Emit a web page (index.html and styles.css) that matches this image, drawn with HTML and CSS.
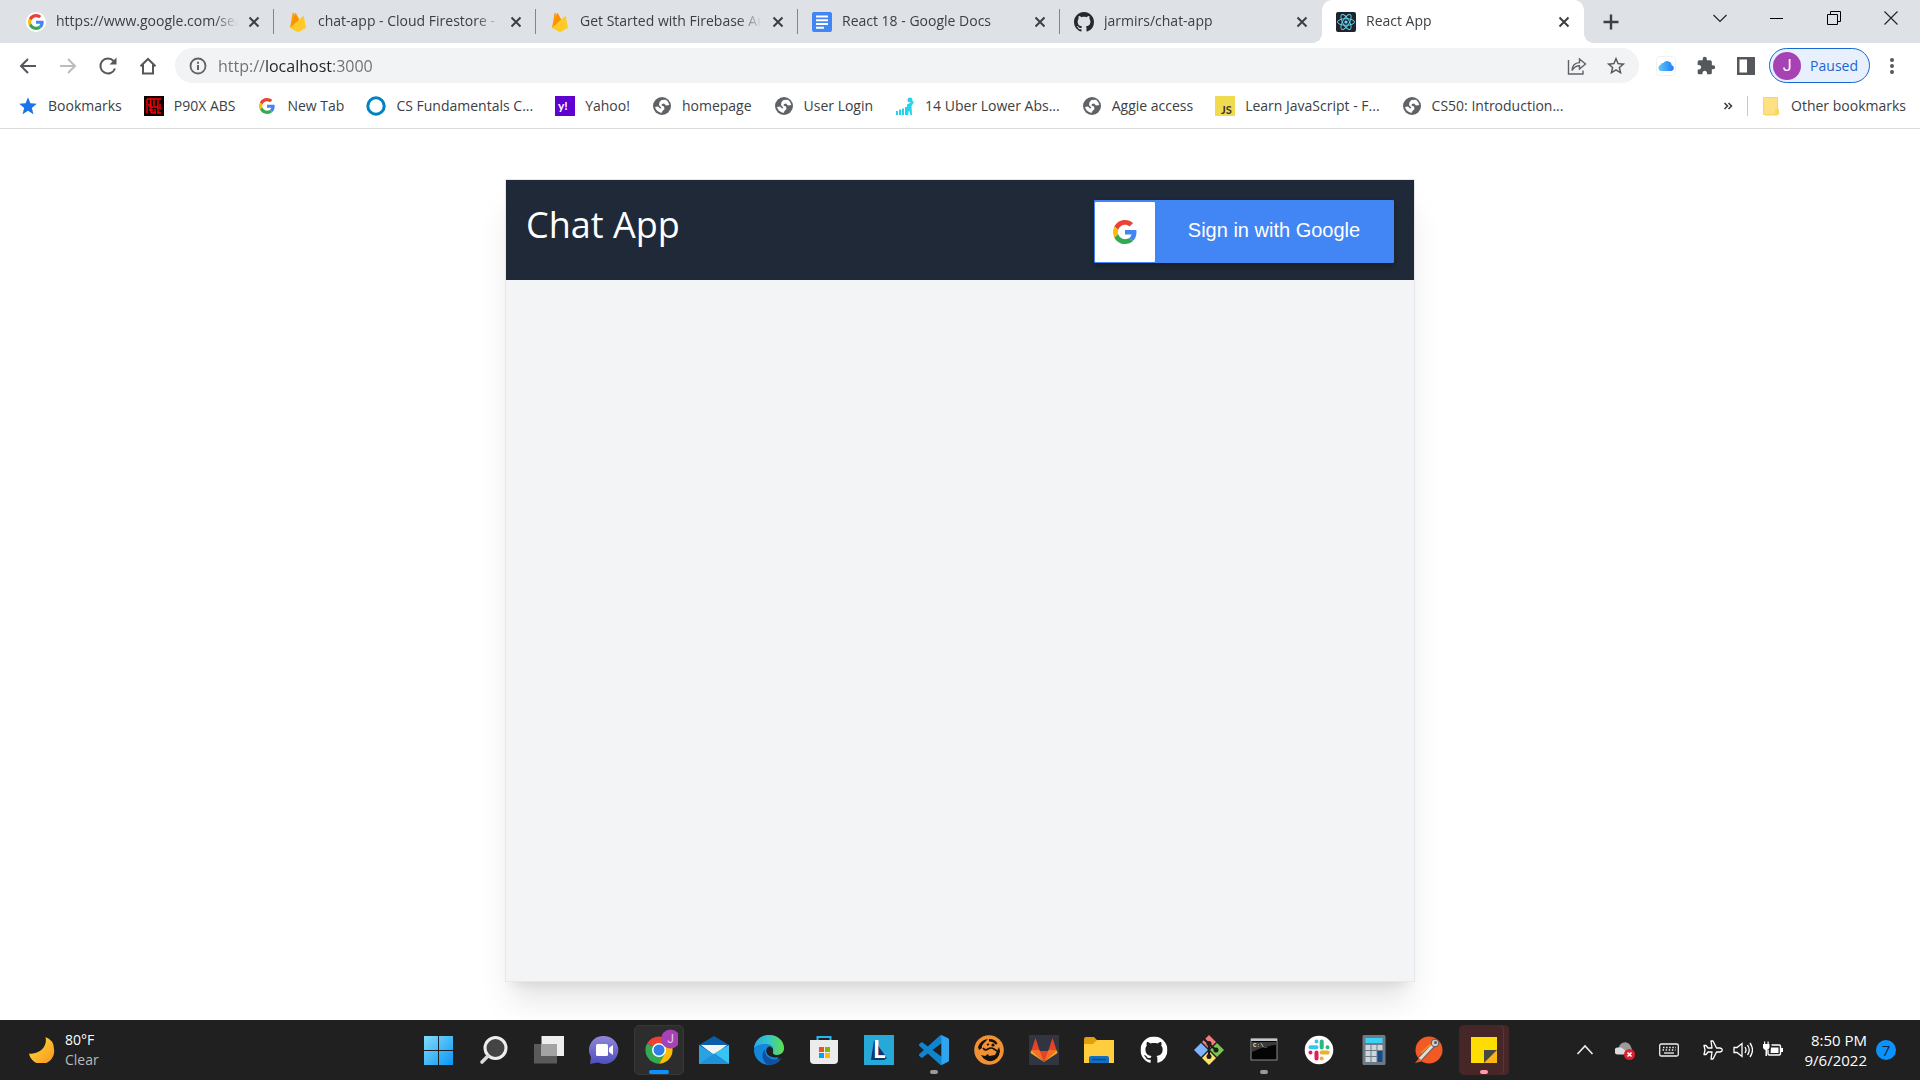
FILE: index.html
```html
<!DOCTYPE html>
<html lang="en">
<head>
<meta charset="utf-8">
<title>React App</title>
<link rel="stylesheet" href="styles.css">
</head>
<body>
<svg class="defs" aria-hidden="true">
  <defs>
    <symbol id="google" viewBox="0 0 48 48">
      <path fill="#ea4335" d="M24 9.5c3.54 0 6.71 1.22 9.21 3.6l6.85-6.85C35.9 2.38 30.47 0 24 0 14.62 0 6.51 5.38 2.56 13.22l7.98 6.19C12.43 13.72 17.74 9.5 24 9.5z"/>
      <path fill="#4285f4" d="M46.98 24.55c0-1.57-.15-3.09-.38-4.55H24v9.02h12.94c-.58 2.96-2.26 5.48-4.78 7.18l7.73 6c4.51-4.18 7.09-10.36 7.09-17.65z"/>
      <path fill="#fbbc05" d="M10.53 28.59c-.48-1.45-.76-2.99-.76-4.59s.27-3.14.76-4.59l-7.98-6.19C.92 16.46 0 20.12 0 24c0 3.88.92 7.54 2.56 10.78l7.97-6.19z"/>
      <path fill="#34a853" d="M24 48c6.48 0 11.93-2.13 15.89-5.81l-7.73-6c-2.15 1.45-4.92 2.3-8.16 2.3-6.26 0-11.57-4.22-13.47-9.91l-7.98 6.19C6.51 42.62 14.62 48 24 48z"/>
    </symbol>
    <symbol id="firebase" viewBox="0 0 20 20">
      <path fill="#ffa000" d="M2 16 4.600 .8q.3-.7.800 0l2.600 4.700z"/>
      <path fill="#ff9100" d="M2 16 7 1.500q.5-.9 1 0l3.500 6.500z"/>
      <path fill="#ffca28" d="M2 16 14.800 4.200q.8-.5 1 .4L18 16l-7 3.700q-1 .5-2 0z"/>
    </symbol>
    <symbol id="github" viewBox="0 0 16 16">
      <path fill="currentColor" d="M8 0C3.58 0 0 3.58 0 8c0 3.54 2.29 6.53 5.47 7.59.4.07.55-.17.55-.38 0-.19-.01-.82-.01-1.49-2.01.37-2.53-.49-2.69-.94-.09-.23-.48-.94-.82-1.13-.28-.15-.68-.52-.01-.53.63-.01 1.08.58 1.23.82.72 1.21 1.87.87 2.33.66.07-.52.28-.87.51-1.07-1.78-.2-3.64-.89-3.64-3.95 0-.87.31-1.59.82-2.15-.08-.2-.36-1.02.08-2.12 0 0 .67-.21 2.2.82.64-.18 1.32-.27 2-.27.68 0 1.36.09 2 .27 1.53-1.04 2.2-.82 2.2-.82.44 1.1.16 1.92.08 2.12.51.56.82 1.27.82 2.15 0 3.07-1.87 3.75-3.65 3.95.29.25.54.73.54 1.48 0 1.07-.01 1.93-.01 2.2 0 .21.15.46.55.38A8.013 8.013 0 0016 8c0-4.42-3.58-8-8-8z"/>
    </symbol>
    <symbol id="globe" viewBox="0 0 20 20">
      <circle cx="10" cy="10" r="9" fill="#5f6368"/>
      <path fill="#fff" d="M9.500 4 14 3.800Q17 6 17.300 9L14 9.500 12 7.500 10 8 9.500 9.500 12 10.500 12.500 13 10.500 15 9.500 17Q4 15.500 3 11L6 10.500 8 12.500 9.500 12 7 9 7.500 6z"/>
    </symbol>
    <symbol id="close" viewBox="0 0 20 20">
      <path stroke="#3c4043" stroke-width="2" fill="none" d="m5.500 5.500 9 9m0-9-9 9"/>
    </symbol>
  </defs>
</svg>

<header class="browser">
  <div class="tabstrip">
    <nav class="tabs" aria-label="Tabs">
      <div class="tab"><span class="tab-icon round"><svg width="16" height="16"><use href="#google"/></svg></span><a class="tab-title" href="#">https://www.google.com/search</a><button class="tab-close" aria-label="Close tab"><svg width="20" height="20"><use href="#close"/></svg></button></div>
      <div class="tab"><span class="tab-icon"><svg width="20" height="20"><use href="#firebase"/></svg></span><a class="tab-title" href="#">chat-app - Cloud Firestore - Firebase</a><button class="tab-close" aria-label="Close tab"><svg width="20" height="20"><use href="#close"/></svg></button></div>
      <div class="tab"><span class="tab-icon"><svg width="20" height="20"><use href="#firebase"/></svg></span><a class="tab-title" href="#">Get Started with Firebase Authentication</a><button class="tab-close" aria-label="Close tab"><svg width="20" height="20"><use href="#close"/></svg></button></div>
      <div class="tab"><span class="tab-icon"><svg width="20" height="20" viewBox="0 0 20 20"><rect width="20" height="20" rx="2" fill="#4285f4"/><path stroke="#fff" stroke-width="2" d="M4 4.500h12M4 8.300h12M4 12h12M4 15.700h8"/></svg></span><a class="tab-title" href="#">React 18 - Google Docs</a><button class="tab-close" aria-label="Close tab"><svg width="20" height="20"><use href="#close"/></svg></button></div>
      <div class="tab"><span class="tab-icon"><svg width="20" height="20"><use href="#github"/></svg></span><a class="tab-title" href="#">jarmirs/chat-app</a><button class="tab-close" aria-label="Close tab"><svg width="20" height="20"><use href="#close"/></svg></button></div>
      <div class="tab active"><span class="tab-icon"><svg width="20" height="20" viewBox="0 0 20 20"><rect width="20" height="20" rx="2" fill="#20232a"/><g fill="none" stroke="#61dafb" stroke-width=".9"><ellipse cx="10" cy="10" rx="8.500" ry="3.300"/><ellipse cx="10" cy="10" rx="8.500" ry="3.300" transform="rotate(60 10 10)"/><ellipse cx="10" cy="10" rx="8.500" ry="3.300" transform="rotate(120 10 10)"/></g><circle cx="10" cy="10" r="1.600" fill="#61dafb"/></svg></span><a class="tab-title" href="#">React App</a><button class="tab-close" aria-label="Close tab"><svg width="20" height="20"><use href="#close"/></svg></button></div>
    </nav>
    <button class="new-tab" aria-label="New tab"><svg width="20" height="20" viewBox="0 0 20 20"><path stroke="#3c4043" stroke-width="2.400" d="M10 2.500v15M2.500 10h15"/></svg></button>
    <div class="window-controls">
      <button aria-label="Search tabs"><svg width="14" height="14" viewBox="0 0 14 14"><path fill="none" stroke="#202124" stroke-width="1.200" d="m.500 4 6.500 6.500L13.500 4"/></svg></button>
      <button aria-label="Minimize"><svg width="14" height="14" viewBox="0 0 14 14"><path stroke="#000" d="M0 7.500h13"/></svg></button>
      <button aria-label="Restore"><svg width="14" height="14" viewBox="0 0 14 14"><path fill="none" stroke="#000" d="M.500 3.500h10v10H.500zM3.500 3.500v-3h10v10h-3"/></svg></button>
      <button aria-label="Close window"><svg width="14" height="14" viewBox="0 0 14 14"><path stroke="#202124" stroke-width="1.100" d="m.500.500 13 13m0-13-13 13"/></svg></button>
    </div>
  </div>

  <div class="toolbar">
    <div class="nav-buttons">
      <button aria-label="Back"><svg width="20" height="20" viewBox="0 0 20 20"><path fill="none" stroke="#54585d" stroke-width="2" d="M18 10H3m7-7-7 7 7 7"/></svg></button>
      <button aria-label="Forward" disabled><svg width="20" height="20" viewBox="0 0 20 20"><path fill="none" stroke="#babcbe" stroke-width="2" d="M2 10h15m-7-7 7 7-7 7"/></svg></button>
      <button aria-label="Reload"><svg width="20" height="20" viewBox="0 0 20 20"><path fill="none" stroke="#54585d" stroke-width="2" d="M17 12.500A7.500 7.500 0 1 1 15.600 5"/><path fill="#54585d" d="M18.500 1.500v7h-7z"/></svg></button>
      <button aria-label="Home"><svg width="20" height="20" viewBox="0 0 20 20"><path fill="none" stroke="#54585d" stroke-width="2" d="M2.500 10.300 10 3l7.500 7.300M5 8.500V17.500h10V8.500"/></svg></button>
    </div>
    <div class="omnibox">
      <svg width="18" height="18" viewBox="0 0 18 18"><circle cx="9" cy="9" r="7.500" fill="none" stroke="#5f6368" stroke-width="1.800"/><path stroke="#5f6368" stroke-width="2" d="M9 8v5M9 4.700v2"/></svg>
      <input class="address" type="text" aria-label="Address" value="http://localhost:3000">
      <button aria-label="Share"><svg width="20" height="20" viewBox="0 0 20 20"><path fill="none" stroke="#5f6368" stroke-width="1.400" d="M1.500 4v14h14.500v-3.500M5 14.500c.2-5 3.200-7.700 7.500-7.900V3l6 5-6 5V9.700c-3.500 0-5.500 1.500-7.500 4.800z"/></svg></button>
      <button aria-label="Bookmark this tab"><svg width="22" height="22" viewBox="0 0 24 24"><path fill="#54585d" d="M22 9.240l-7.190-.62L12 2 9.190 8.630 2 9.240l5.460 4.730L5.820 21 12 17.270 18.180 21l-1.630-7.030L22 9.240zM12 15.400l-3.760 2.270 1-4.280-3.320-2.880 4.380-.38L12 6.100l1.710 4.040 4.380.38-3.320 2.880 1 4.280L12 15.400z"/></svg></button>
    </div>
    <div class="extensions">
      <button aria-label="iCloud Bookmarks"><svg width="20" height="20" viewBox="0 0 20 20"><defs><linearGradient id="cloud"><stop offset="0" stop-color="#5cc8fa"/><stop offset="1" stop-color="#1f7bf6"/></linearGradient></defs><rect x=".5" y=".5" width="19" height="19" rx="3" fill="#fff" stroke="#f1f1f1"/><path fill="url(#cloud)" d="M5.500 15a3 3 0 0 1-.8-5.900 2 2 0 0 1 2.500-2 4.700 4.700 0 0 1 8.500 2.100A3 3 0 0 1 15.500 15z"/></svg></button>
      <button aria-label="Extensions"><svg width="20" height="20" viewBox="0 0 24 24"><path fill="#54585d" d="M20.500 11H19V7c0-1.100-.9-2-2-2h-4V3.500a2.500 2.500 0 0 0-5 0V5H4c-1.100 0-1.990.9-1.990 2v3.800H3.500c1.490 0 2.700 1.210 2.700 2.700s-1.210 2.700-2.700 2.700H2V20c0 1.100.9 2 2 2h3.800v-1.500c0-1.490 1.210-2.700 2.700-2.700s2.700 1.210 2.700 2.700V22H17c1.100 0 2-.9 2-2v-4h1.500a2.500 2.500 0 0 0 0-5z"/></svg></button>
      <button aria-label="Side panel"><svg width="20" height="20" viewBox="0 0 20 20"><path fill="#54585d" fill-rule="evenodd" d="M1 1h18v18H1zM3.500 3.500v13h7.500v-13z"/></svg></button>
    </div>
    <button class="profile"><span class="avatar">J</span>Paused</button>
    <button class="menu" aria-label="Menu"><svg width="20" height="20" viewBox="0 0 20 20"><g fill="#54585d"><circle cx="10" cy="4" r="2"/><circle cx="10" cy="10" r="2"/><circle cx="10" cy="16" r="2"/></g></svg></button>
  </div>

  <nav class="bookmarks" aria-label="Bookmarks">
    <a href="#"><svg width="20" height="20" viewBox="0 0 24 24"><path fill="#1a73e8" d="m12 1.500 2.900 7.300 7.600.6-5.900 5 1.900 7.600L12 17.800 5.500 22l1.900-7.600-5.900-5 7.600-.6z"/></svg>Bookmarks</a>
    <a href="#"><svg width="20" height="20" viewBox="0 0 20 20"><path fill="#100" d="M0 0h20v20H0z"/><path fill="none" stroke="#f00" stroke-width="1.400" d="M3 3v14M3 3h3.500v6H4M7 3h6M10 3v7M7 8v9M17 3h-3v14h3M5 11h9M5 14h4M11 13v4M16 8v5M7 17h5"/></svg>P90X ABS</a>
    <a href="#"><svg width="20" height="20" viewBox="0 0 20 20"><use href="#google" x="2" y="2" width="16" height="16"/></svg>New Tab</a>
    <a href="#"><svg width="20" height="20" viewBox="0 0 20 20"><circle cx="10" cy="10" r="8.200" fill="none" stroke="#0082c3" stroke-width="3"/></svg>CS Fundamentals C...</a>
    <a href="#"><svg width="20" height="20" viewBox="0 0 20 20"><path fill="#5f01d1" d="M0 0h20v20H0z"/><text x="3" y="14" class="yahoo">y!</text></svg>Yahoo!</a>
    <a href="#"><svg width="20" height="20"><use href="#globe"/></svg>homepage</a>
    <a href="#"><svg width="20" height="20"><use href="#globe"/></svg>User Login</a>
    <a href="#"><svg width="20" height="20" viewBox="0 0 20 20"><path stroke="#22d3ee" stroke-width="2" d="M2 15v4M5 13.500V19M8 12.500V19M11 11v8"/><circle cx="15" cy="4" r="2.500" fill="#22d3ee"/><path fill="#22d3ee" d="M12 8.500 15 7l3-2 1 1-2.500 4 .5 9h-1.500L14 14l-1 5h-1z"/></svg>14 Uber Lower Abs...</a>
    <a href="#"><svg width="20" height="20"><use href="#globe"/></svg>Aggie access</a>
    <a href="#"><svg width="20" height="20" viewBox="0 0 20 20"><path fill="#f0db4f" d="M0 0h20v20H0z"/><text x="6" y="18" class="js">JS</text></svg>Learn JavaScript - F...</a>
    <a href="#"><svg width="20" height="20"><use href="#globe"/></svg>CS50: Introduction...</a>
    <button class="more" aria-label="More bookmarks"><svg width="10" height="10" viewBox="0 0 10 10"><path fill="none" stroke="#3c4043" stroke-width="1.600" d="m1.500 2 3 3-3 3m4-6 3 3-3 3"/></svg></button>
    <a class="other" href="#"><svg width="20" height="20" viewBox="0 0 20 20"><path fill="#ffe082" stroke="#fbd35f" d="M2.500 1.500h14v17h-14z"/><path fill="#ffd65c" d="M14 13.500q2-2 4 0V18q-1 1.500-2 1.500H4V18h10z"/></svg>Other bookmarks</a>
  </nav>
</header>

<main class="page">
  <section class="chat">
    <div class="chat-header">
      <h1>Chat App</h1>
      <button class="sign-in"><span class="sign-in-logo"><svg width="24" height="24"><use href="#google"/></svg></span><span class="sign-in-label">Sign in with Google</span></button>
    </div>
  </section>
</main>

<footer class="taskbar">
  <button class="weather">
    <svg width="26" height="26" viewBox="0 0 26 26"><defs><linearGradient id="moon" x1="0" y1="0" x2="1" y2="1"><stop offset="0" stop-color="#ffe03c"/><stop offset="1" stop-color="#f7941e"/></linearGradient></defs><path fill="url(#moon)" d="M16.500 0A13 13 0 0 1 25 12 12 12 0 0 1 0 16.500C10 18 19 10 16.500 0z"/></svg>
    <span class="weather-text"><span>80°F</span><span class="sky">Clear</span></span>
  </button>

  <nav class="apps" aria-label="Apps">
    <button aria-label="Start"><svg width="30" height="30" viewBox="0 0 30 30"><defs><linearGradient id="win" x1="0" y1="0" x2="1" y2="1" gradientUnits="objectBoundingBox"><stop offset="0" stop-color="#82dcfb"/><stop offset="1" stop-color="#0a96f5"/></linearGradient></defs><path fill="url(#win)" d="M0 1h14v14H0zM15 1h14v14H15zM0 16h14v14H0zM15 16h14v14H15z"/></svg></button>
    <button aria-label="Search"><svg width="30" height="30" viewBox="0 0 30 30"><circle cx="16.500" cy="13" r="10.500" fill="#444" stroke="#eee" stroke-width="3"/><path stroke="#d8dadd" stroke-width="3.600" stroke-linecap="round" d="m9 21-6 6"/></svg></button>
    <button aria-label="Task view"><svg width="30" height="30" viewBox="0 0 30 30"><path fill="#5a5a5a" d="M0 9h23v19.500H0z"/><path fill="#eee" d="M7.500 1H30v20H7.500z"/><path fill="#a3a3a3" d="M7.500 9H23v12H7.500z"/></svg></button>
    <button aria-label="Chat"><svg width="30" height="30" viewBox="0 0 30 30"><defs><linearGradient id="teams" x1="0" y1="0" x2="0" y2="1"><stop offset="0" stop-color="#9187d8"/><stop offset="1" stop-color="#4f50c0"/></linearGradient></defs><path fill="url(#teams)" d="M15.500 1a14 14 0 1 1-6.500 26.500L1 29l1-7A14 14 0 0 1 15.500 1z"/><rect x="7" y="9" width="12" height="12" rx="1.500" fill="#fff"/><path fill="#fff" d="m20 13 4-3v10l-4-3z"/></svg></button>
    <button class="current" aria-label="Chrome"><svg width="36" height="36" viewBox="0 0 36 36"><path fill="#ea4335" d="M17 21 5.200 14.200a13.700 13.700 0 0 1 23.600 0H17z"/><path fill="#34a853" d="M5.200 14.200A13.700 13.700 0 0 0 17 34.700l6-10.300-6-3.400z"/><path fill="#fbbc05" d="M28.800 14.200A13.700 13.700 0 0 1 17 34.700l6-10.300V14.200z"/><circle cx="17" cy="21" r="7" fill="#fff"/><circle cx="17" cy="21" r="5.500" fill="#2f7de9"/><circle cx="28.500" cy="10" r="9.500" fill="#a742b5"/><text x="28.500" y="14" class="badge-j">J</text></svg></button>
    <button aria-label="Mail"><svg width="30" height="30" viewBox="0 0 30 30"><path fill="#0a5ea8" d="m15 1 15 9v6H0v-6z"/><path fill="#f3f3f3" d="M2 10h26L15 20z"/><path fill="#2aa3e3" d="m0 10 15 9.500L30 29H0z"/><path fill="#39c3f3" d="m30 10-15 8.500L30 29z"/><path fill="#1e93dc" d="M0 29 15 18.500 30 29z"/></svg></button>
    <button aria-label="Edge"><svg width="30" height="30" viewBox="0 0 30 30"><defs><linearGradient id="edge"><stop offset="0" stop-color="#2aa8e8"/><stop offset=".5" stop-color="#35c8c5"/><stop offset="1" stop-color="#62e048"/></linearGradient></defs><circle cx="15" cy="15" r="15" fill="#1387dc"/><path fill="#202020" d="M30 14v9.500l-3 3-4-2z"/><path fill="url(#edge)" d="M0 13C1 5 7 0 15 0c9 0 15 6 15 13 0 4.500-3 7-7 7-3 0-5-1-4-3.500 1.500-4-2-7.500-7-7.500-5.500 0-9.500 1.500-12 4z"/><path fill="#1251a0" d="M11 14c-1 8 7 13 16.500 9C24.500 28 20 30 15.500 30 9 29 6 19 11 14z"/><path fill="#202020" d="M15 11.500c3 0 4.500 2.500 4 5-.3 2 .5 3.500 4 3.500 2.500 0 4.500-1 6-2.500-1 4-4.500 5-8 5-5.500 0-10-4-8.500-8.500q.7-2 2.500-2.500z"/></svg></button>
    <button aria-label="Store"><svg width="30" height="30" viewBox="0 0 30 30"><path fill="none" stroke="#27b5ef" stroke-width="2" d="M8.500 7V2h13v5"/><path fill="#ececec" d="M1 5h28v20q0 4-4 4H5q-4 0-4-4z"/><path fill="#f25022" d="M10 12h5v5h-5z"/><path fill="#7fba00" d="M16 12h5v5h-5z"/><path fill="#00a4ef" d="M10 18h5v5h-5z"/><path fill="#ffb900" d="M16 18h5v5h-5z"/></svg></button>
    <button aria-label="LockDown Browser"><svg width="30" height="30" viewBox="0 0 30 30"><path fill="#27a9d8" d="M0 0h30v30H0z"/><path fill="#10356e" d="M10 5 7 25h13l3-2z"/><text x="9" y="23" class="ell">L</text></svg></button>
    <button class="running" aria-label="Visual Studio Code"><svg width="30" height="30" viewBox="0 0 24 24"><path fill="#1184cf" d="M23.150 2.587L18.210.21a1.494 1.494 0 0 0-1.705.29l-9.460 8.630-4.120-3.128a.999.999 0 0 0-1.276.057L.327 7.261A1 1 0 0 0 .326 8.740L3.899 12 .326 15.260a1 1 0 0 0 .001 1.479L1.650 17.940a.999.999 0 0 0 1.276.057l4.120-3.128 9.460 8.630a1.492 1.492 0 0 0 1.704.29l4.942-2.377A1.500 1.500 0 0 0 24 20.060V3.939a1.500 1.500 0 0 0-.85-1.352zm-5.146 14.861L10.826 12l7.178-5.448v10.896z"/><path fill="#2fa5f0" d="M18 .1 23.150 2.587a1.500 1.500 0 0 1 .85 1.352V20.060a1.500 1.500 0 0 1-.85 1.352L18 23.900z"/></svg></button>
    <button aria-label="Mascot"><svg width="30" height="30" viewBox="0 0 30 30"><circle cx="15" cy="15" r="14.800" fill="#f19134"/><path fill="#17110b" d="M4 12Q7 4.500 14 4l-4 4q-3 3-2 5l-3 2zM15 4q7 0 8.500 5l-2 .5q-2-3-6.500-3zM7 20l4 1 3-2 1 2 6-1 4-8 1 4q-1 8-8 10-7 1-11-6z"/><path fill="none" stroke="#17110b" stroke-width="1.600" d="M9 13q2 3 5 1t6 0l3 2M13 10l2-1"/><circle cx="19" cy="10" r="1.600" fill="#17110b"/></svg></button>
    <button aria-label="GitLab"><svg width="30" height="30" viewBox="0 0 30 30"><path fill="#30353f" d="M0 0h30v30H0z"/><path fill="#e24329" d="m15 27-5-11h10zM2.500 15l4-12 4 12zM27.500 15l-4-12-4 12z"/><path fill="#fc6d26" d="M15 27 2.500 15h8zM15 27l12.500-12h-8z"/><path fill="#fca326" d="M15 27 1.500 18l1-3zM15 27l13.500-9-1-3z"/></svg></button>
    <button aria-label="File Explorer"><svg width="30" height="30" viewBox="0 0 30 30"><path fill="#e0a00c" d="M0 4q0-2 2-2h8l3 3h15v8H0z"/><path fill="#ffcd3d" d="M0 9h9l4-4h17v23H0z"/><path fill="#126fc4" d="M5 28v-5q0-2 2-2h16q2 0 2 2v5z"/><path stroke="#084a8c" stroke-width="1.500" d="M8 24.500h14"/></svg></button>
    <button class="light" aria-label="GitHub Desktop"><svg width="30" height="30" viewBox="0 0 30 30"><use href="#github" x="1.500" y="1.500" width="27" height="27"/></svg></button>
    <button aria-label="Git"><svg width="30" height="30" viewBox="0 0 30 30"><path fill="#f47c7c" d="m15 0 7 7-7 7-7-7z"/><path fill="#7fb2ff" d="m7 8 7 7-7 7-7-7z"/><path fill="#7bc54e" d="m23 8 7 7-7 7-7-7z"/><path fill="#fbe36b" d="m15 16 7 7-7 7-7-7z"/><path fill="none" stroke="#1d1d1d" stroke-width="2.200" d="m9 3 6 6v12M15 9l7 6"/><g fill="#1d1d1d"><circle cx="15" cy="8.500" r="2.500"/><circle cx="22" cy="15" r="2.500"/><circle cx="15" cy="21.500" r="2.500"/></g></svg></button>
    <button class="running" aria-label="Command Prompt"><svg width="30" height="30" viewBox="0 0 30 30"><rect x="2" y="4" width="26" height="21" fill="#050505" stroke="#8a8d91"/><path fill="#c2c7cc" d="M2 3.500h26v2.500H2z"/><path fill="#3a3a3a" d="M3 7h24v3q-12 1-24 7z"/><text x="4" y="12" class="prompt">C:\_</text></svg></button>
    <button aria-label="Slack"><svg width="30" height="30" viewBox="0 0 30 30"><circle cx="15" cy="15" r="14.300" fill="#fff"/><g stroke-width="4" stroke-linecap="round"><path stroke="#36c5f0" d="M6.500 12.200h6M12.500 6.500v.100"/><path stroke="#2eb67d" d="M17.700 6.500v6M23.500 12.200v.100"/><path stroke="#ecb22e" d="M17.700 17.500h6M17.700 23.500v.100"/><path stroke="#e01e5a" d="M12.500 17.500v6M6.500 17.500v.100"/></g></svg></button>
    <button aria-label="Calculator"><svg width="30" height="30" viewBox="0 0 30 30"><rect x="3.500" width="23" height="30" rx="1.500" fill="#6f7a85"/><path fill="#3cd2f7" d="M6.500 3h17v5h-17z"/><path fill="#ccd6df" d="M6.500 10h5v5h-5zM12.500 10h5v5h-5zM18.500 10h5v5h-5zM6.500 16h5v5h-5zM12.500 16h5v5h-5zM6.500 22h5v5h-5zM12.500 22h5v5h-5z"/><path fill="#144a8f" d="M18.500 16h5v11h-5z"/></svg></button>
    <button aria-label="Postman"><svg width="30" height="30" viewBox="0 0 30 30"><circle cx="15" cy="15" r="13.500" fill="#f15a24"/><path fill="#f15a24" d="m1 28 5-6 3 4z"/><path stroke="#6b5a55" stroke-width="5" d="M6 24 20 9"/><path stroke="#ddd" stroke-width="3" d="M6 24 20 9"/><path stroke="#f7941e" stroke-width="1.500" d="M7 18 17 9"/><circle cx="21" cy="8" r="3.800" fill="#ccc" stroke="#5e5552"/><circle cx="21.500" cy="7.500" r="1.500" fill="#5e5552"/></svg></button>
    <button class="alert" aria-label="Sticky Notes"><svg width="30" height="30" viewBox="0 0 30 30"><path fill="#fedd00" d="M2 2h26v26H2z"/><path fill="#fbb615" d="M15 28h13V15z"/><path fill="#474747" d="M15 15h13L15 28z"/></svg></button>
  </nav>

  <div class="tray">
    <button class="chevron" aria-label="Hidden icons"><svg width="20" height="20" viewBox="0 0 20 20"><path fill="none" stroke="#eee" stroke-width="1.600" d="m2.500 14 7.500-8 7.500 8"/></svg></button>
    <button aria-label="OneDrive"><svg width="20" height="20" viewBox="0 0 20 20"><path fill="#9b9b9b" d="M4 10a6 6 0 0 1 12-3q2 3 1 6H4z"/><path fill="#dcdcdc" d="M3 14.500a3.500 3.500 0 0 1 0-7q3-1 6 2l5 5z"/><circle cx="14.500" cy="14.500" r="5.500" fill="#d9232e"/><path stroke="#fff" stroke-width="1.600" d="m12.500 12.500 4 4m0-4-4 4"/></svg></button>
    <button class="keyboard" aria-label="Touch keyboard"><svg width="20" height="20" viewBox="0 0 20 20"><rect x=".7" y="4" width="18.600" height="12" rx="1.500" fill="none" stroke="#eee" stroke-width="1.300"/><path stroke="#eee" stroke-width="1.500" stroke-dasharray="1.500 1.600" d="M4 7.500h13M3.500 10h13"/><path stroke="#eee" stroke-width="1.300" d="M5 13h10"/></svg></button>
    <button class="status" aria-label="Network, volume and battery">
      <svg width="20" height="20" viewBox="0 0 20 20"><path fill="none" stroke="#fff" stroke-width="1.300" stroke-linejoin="round" d="M8 1h2l3.500 7H17q2.300.5 2.300 2T17 12h-3.500L10 19H8l1-7H5l-2 2.500H1L2 10 1 5.500h2L5 8h4z"/></svg>
      <svg width="20" height="20" viewBox="0 0 20 20"><path fill="none" stroke="#fff" stroke-width="1.300" d="M1 7.500h3L9 3.500v13l-5-4H1zM12 7q2 3 0 6M14.500 5q3.500 5 0 10M17 3q5 7 0 14"/></svg>
      <svg width="20" height="20" viewBox="0 0 20 20"><path fill="none" stroke="#fff" stroke-width="1.400" d="M8.500 5H16q1.500 0 1.500 1.500v7Q17.500 15 16 15H6.500q-1.500 0-1.500-1.500V10"/><path fill="#fff" d="M8 7.500h7.500v5.500H7.500zM18 8h2v4h-2zM0 4h6.500v3.500Q6 9.500 4 10v6H2.500v-6Q.500 9.500 0 7.500zM1 1.500h1.200V5H1zM4.500 1.500h1.200V5H4.500z"/></svg>
    </button>
    <button class="clock"><span class="datetime"><span>8:50 PM</span><span>9/6/2022</span></span><span class="count">7</span></button>
  </div>
</footer>
</body>
</html>
```

FILE: styles.css
```css
* {
  box-sizing: border-box;
}

body {
  display: flex;
  flex-direction: column;
  min-height: 100vh;
  margin: 0;
  background: #fff;
  color: #3c4043;
  font: 14px/20px "Open Sans", "Noto Sans", sans-serif;
}

button {
  display: flex;
  align-items: center;
  justify-content: center;
  padding: 0;
  border: 0;
  background: none;
  color: inherit;
  font: inherit;
}

a {
  color: inherit;
  text-decoration: none;
}

svg {
  display: block;
  flex: none;
}

.defs {
  position: absolute;
  width: 0;
  height: 0;
}

/* Tab strip */
.tabstrip {
  display: flex;
  height: 43px;
  padding-left: 12px;
  background: #dee1e6;
}

.tabs {
  display: flex;
  flex: 0 1 1572px;
  min-width: 0;
}

.tab {
  position: relative;
  display: flex;
  flex: 1 1 0;
  align-items: center;
  min-width: 0;
  padding: 0 10px 0 14px;
}

.tab:not(.active)::after {
  content: "";
  position: absolute;
  top: 9px;
  right: 0;
  width: 1px;
  height: 25px;
  background: #80868b;
}

.tab:nth-last-child(2)::after {
  display: none;
}

.tab-icon {
  display: flex;
  flex: none;
  align-items: center;
  justify-content: center;
  width: 20px;
  height: 20px;
  margin-right: 10px;
  color: #24292f;
}

.tab-icon.round {
  border-radius: 50%;
  background: #fff;
}

.tab-title {
  flex: 1;
  overflow: hidden;
  margin-right: 6px;
  padding-bottom: 2px;
  white-space: nowrap;
  mask-image: linear-gradient(to left, transparent, #000 24px);
}

.tab-close {
  flex: none;
}

.tab.active {
  border-radius: 10px 10px 0 0;
  background: #fff;
}

.tab.active::before,
.tab.active::after {
  content: "";
  position: absolute;
  bottom: 0;
  width: 10px;
  height: 10px;
}

.tab.active::before {
  right: 100%;
  background: radial-gradient(circle at 0 0, transparent 10px, #fff 10px);
}

.tab.active::after {
  left: 100%;
  background: radial-gradient(circle at 100% 0, transparent 10px, #fff 10px);
}

.new-tab {
  width: 54px;
}

.window-controls {
  display: flex;
  height: 36px;
  margin-right: 1px;
  margin-left: auto;
}

.window-controls button {
  width: 57px;
}

/* Toolbar */
.toolbar {
  display: flex;
  align-items: center;
  height: 45px;
  padding: 0 18px 0 8px;
}

.nav-buttons,
.extensions {
  display: flex;
}

.nav-buttons button,
.extensions button {
  width: 40px;
  height: 35px;
}

.omnibox {
  display: flex;
  flex: 1;
  align-items: center;
  height: 35px;
  margin-left: 7px;
  padding: 0 4px 0 14px;
  border-radius: 18px;
  background: #f1f3f4;
}

.omnibox button {
  width: 39px;
  height: 35px;
}

.address {
  flex: 1;
  min-width: 0;
  height: 35px;
  margin-left: 11px;
  padding: 0;
  border: 0;
  outline: 0;
  background: linear-gradient(to right, #6b6f74 47px, #202124 47px 114px, #6b6f74 114px) text;
  color: transparent;
  font: 16px/24px "Open Sans", "Noto Sans", sans-serif;
}

.extensions {
  margin-left: 7px;
}

.profile {
  gap: 9px;
  height: 35px;
  margin-left: 3px;
  padding: 0 11px 0 3px;
  border: 1px solid #1967d2;
  border-radius: 18px;
  background: #e8f0fe;
  color: #1967d2;
}

.avatar {
  width: 28px;
  height: 28px;
  border-radius: 50%;
  background: #a742b5;
  color: #fff;
  font: 16px/28px Roboto, sans-serif;
}

.menu {
  width: 20px;
  margin-left: 12px;
}

/* Bookmarks bar */
.bookmarks {
  display: flex;
  align-items: center;
  gap: 22px;
  height: 41px;
  padding: 0 14px 4px 18px;
  border-bottom: 1px solid #dadce0;
  white-space: nowrap;
}

.bookmarks a {
  display: flex;
  align-items: center;
  gap: 10px;
}

.more {
  margin-left: auto;
  margin-right: -8px;
}

.bookmarks .other {
  padding-left: 13px;
  border-left: 1px solid #c6c8cb;
}

.yahoo {
  fill: #fff;
  font: bold 12px "Lato", sans-serif;
}

.js {
  fill: #323330;
  font: bold 11px "Lato", sans-serif;
}

/* Page */
.page {
  display: flex;
  flex: 1;
  overflow: hidden;
  padding: 50px 20px 38px;
}

.chat {
  flex: 1;
  max-width: 910px;
  margin: 0 auto;
  border: 1px solid #e5e7eb;
  background: #f3f4f6;
  box-shadow: 0 25px 31px -6px rgba(0, 0, 0, 0.1), 0 10px 12px -8px rgba(0, 0, 0, 0.1);
}

.chat-header {
  display: flex;
  align-items: flex-start;
  justify-content: space-between;
  height: 100px;
  padding: 20px;
  background: #1f2937;
}

.chat-header h1 {
  margin: 0;
  color: #fff;
  font-size: 36px;
  font-weight: 400;
  line-height: 50px;
}

.sign-in {
  width: 300px;
  height: 63px;
  padding: 1px;
  border-radius: 1px;
  background: #4285f4;
  box-shadow: 0 3px 5px rgba(0, 0, 0, 0.25);
  color: #fff;
  font: 20px/56px "Liberation Sans", Arial, sans-serif;
}

.sign-in-logo {
  display: flex;
  align-items: center;
  justify-content: center;
  width: 60px;
  height: 60px;
  border-radius: 1px;
  background: #fff;
}

.sign-in-label {
  flex: 1;
  padding-bottom: 4px;
}

/* Taskbar */
.taskbar {
  display: grid;
  grid-template-columns: 1fr auto 1fr;
  align-items: center;
  height: 60px;
  background: #202020;
  color: #fff;
}

.weather {
  gap: 10px;
  justify-self: start;
  padding-left: 29px;
  text-align: left;
}

.weather-text,
.datetime {
  display: flex;
  flex-direction: column;
}

.sky {
  color: #b9b9b9;
}

.apps {
  display: flex;
  gap: 5px;
  padding-left: 2px;
}

.apps button {
  position: relative;
  width: 50px;
  height: 50px;
  border-radius: 5px;
}

.apps .light {
  color: #fff;
}

.apps .current {
  border: 1px solid #383838;
  background: #2d2d2d;
}

.apps .current svg {
  margin: -6px 0 0 2px;
}

.apps .alert {
  background: #472628;
  box-shadow: inset -5px 0 #472628, inset -6px 0 #5c3537;
}

.current::after,
.running::after,
.alert::after {
  content: "";
  position: absolute;
  bottom: 1px;
  left: 50%;
  width: 8px;
  height: 4px;
  margin-left: -4px;
  border-radius: 2px;
  background: #9a9a9a;
}

.current::after {
  bottom: 0;
  width: 20px;
  margin-left: -10px;
  background: #0a93ff;
}

.alert::after {
  background: #ff99a4;
}

.badge-j {
  fill: #e6c8ea;
  font: 12px Roboto, sans-serif;
  text-anchor: middle;
}

.ell {
  fill: #fff;
  font: bold 24px "Lato", sans-serif;
}

.prompt {
  fill: #ddd;
  font: bold 6px "Liberation Mono", monospace;
}

.tray {
  display: flex;
  justify-self: end;
  align-items: center;
  padding-right: 24px;
}

.chevron {
  margin-right: 20px;
}

.keyboard {
  margin: 0 24px;
}

.status {
  gap: 10px;
  margin-right: 22px;
}

.clock {
  gap: 9px;
  font-size: 15px;
  text-align: right;
}

.count {
  width: 20px;
  height: 20px;
  border-radius: 50%;
  background: #0a93ff;
  color: #10263c;
  text-align: center;
}
```
